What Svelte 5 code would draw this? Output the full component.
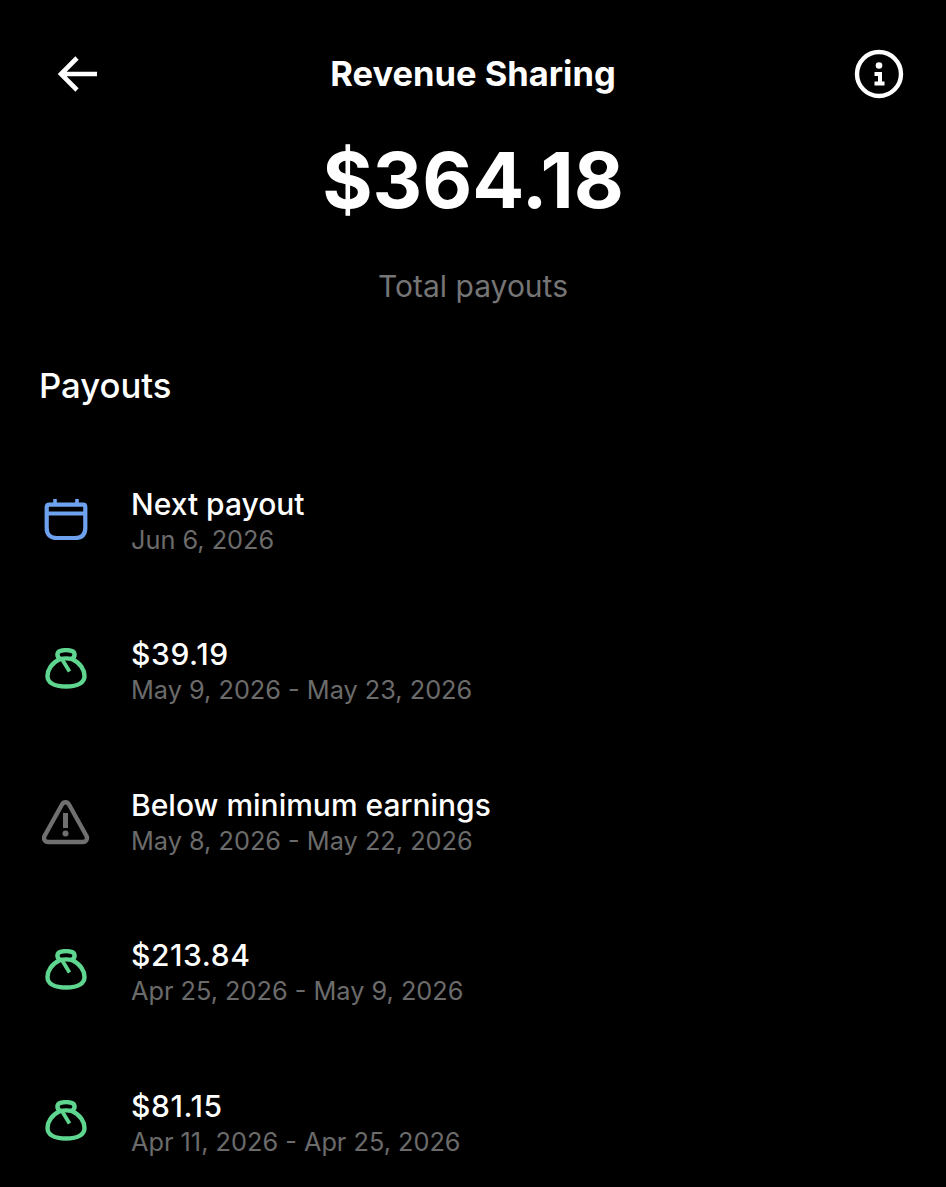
<script>
  const rows = [
    { icon: 'cal', title: 'Next payout', sub: 'Jun 6, 2026' },
    { icon: 'bag', title: '$39.19', sub: 'May 9, 2026 - May 23, 2026', money: true },
    { icon: 'warn', title: 'Below minimum earnings', sub: 'May 8, 2026 - May 22, 2026' },
    { icon: 'bag', title: '$213.84', sub: 'Apr 25, 2026 - May 9, 2026', money: true },
    { icon: 'bag', title: '$81.15', sub: 'Apr 11, 2026 - Apr 25, 2026', money: true }
  ];
</script>

<div class="page">
  <header class="bar">
    <svg class="back" width="48" height="48" viewBox="0 0 48 48" fill="none" stroke="#fff" stroke-width="4.600">
      <path d="M44 24H8M24 8L8 24L24 40" />
    </svg>
    <h1>Revenue Sharing</h1>
    <svg class="info" width="52" height="52" viewBox="0 0 52 52" fill="none" stroke="#fff" stroke-width="4.400">
      <circle cx="26" cy="26" r="22" />
      <circle cx="26" cy="17.500" r="3.300" fill="#fff" stroke="none" />
      <path d="M21.500 26H27V35.500M21.500 35.500H31.500" stroke-width="4" />
    </svg>
  </header>

  <div class="amount">$364.18</div>
  <div class="caption">Total payouts</div>
  <h2>Payouts</h2>

  <ul>
    {#each rows as r}
      <li>
        <span class="ico">
          {#if r.icon === 'cal'}
            <svg width="48" height="48" viewBox="0 0 48 48" fill="none" stroke="#6ea2ee" stroke-width="4.200">
              <path d="M4.700 9Q4.700 6.700 7 6.700H41Q43.300 6.700 43.300 9V30Q43.300 40 33 40H15Q4.700 40 4.700 30Z" />
              <path d="M4.700 15.500H43.300" />
              <path d="M13 1V7M35 1V7" stroke-width="3.600" />
            </svg>
          {:else if r.icon === 'bag'}
            <svg width="48" height="48" viewBox="0 0 48 48" fill="none" stroke="#5fd68f" stroke-width="4.400">
              <path d="M18 11C14.500 8.500 14.500 4 18.500 2.800C21 2.200 27 2.200 29.500 2.800C33.500 4 33.500 8.500 30 11C26 10.200 22 10.200 18 11Z" stroke-linejoin="round" />
              <path d="M18 11C9.500 15 5.500 22 5.500 28C5.500 34 11 38.500 24 38.500C37 38.500 42.500 34 42.500 28C42.500 22 38.500 15 30 11" />
              <path d="M20.500 12L27.500 23.500" stroke-width="3.800" />
            </svg>
          {:else}
            <svg width="48" height="48" viewBox="0 0 48 48" fill="none" stroke="#707070" stroke-width="4.400">
              <path d="M20 5.500C21.700 2.500 25.300 2.500 27 5.500L44.500 37C46 40 44 43 41 43H6C3 43 1 40 2.500 37Z" stroke-linejoin="round" />
              <path d="M23.500 14V29" stroke-width="5" />
              <circle cx="23.500" cy="34.500" r="3" fill="#707070" stroke="none" />
            </svg>
          {/if}
        </span>
        <div class="text">
          <div class="title" class:money={r.money}>{r.title}</div>
          <div class="sub">{r.sub}</div>
        </div>
      </li>
    {/each}
  </ul>
</div>

<style>
  :global(body) {
    margin: 0;
    background: #000;
  }
  .page {
    width: 946px;
    height: 1187px;
    overflow: hidden;
    background: #000;
    color: #fff;
    font-family: Inter, "Noto Sans", sans-serif;
  }
  .bar {
    display: grid;
    grid-template-columns: 1fr auto 1fr;
    align-items: center;
    padding: 48px 41px 0;
    height: 52px;
  }
  .back {
    margin-left: 12px;
  }
  .info {
    justify-self: end;
  }
  h1 {
    margin: 0;
    font-size: 34.500px;
    font-weight: 700;
    line-height: 52px;
  }
  .amount {
    margin-top: 38px;
    text-align: center;
    font-size: 77px;
    font-weight: 700;
    line-height: 84px;
  }
  .caption {
    margin-top: 44px;
    text-align: center;
    font-size: 30px;
    line-height: 40px;
    color: #757575;
  }
  h2 {
    margin: 59px 0 0 39px;
    font-size: 34.700px;
    font-weight: 500;
    line-height: 40px;
  }
  ul {
    list-style: none;
    margin: 0;
    padding: 79px 0 0 42px;
    display: flex;
    flex-direction: column;
    gap: 74.400px;
  }
  li {
    display: flex;
    align-items: center;
    gap: 41px;
    height: 76px;
  }
  .ico {
    display: flex;
    width: 48px;
    height: 48px;
  }
  .title {
    font-size: 30px;
    font-weight: 500;
    line-height: 36px;
  }
  .money {
    letter-spacing: 0.600px;
  }
  .sub {
    font-size: 25.300px;
    line-height: 36px;
    color: #6b6b6b;
  }
</style>
